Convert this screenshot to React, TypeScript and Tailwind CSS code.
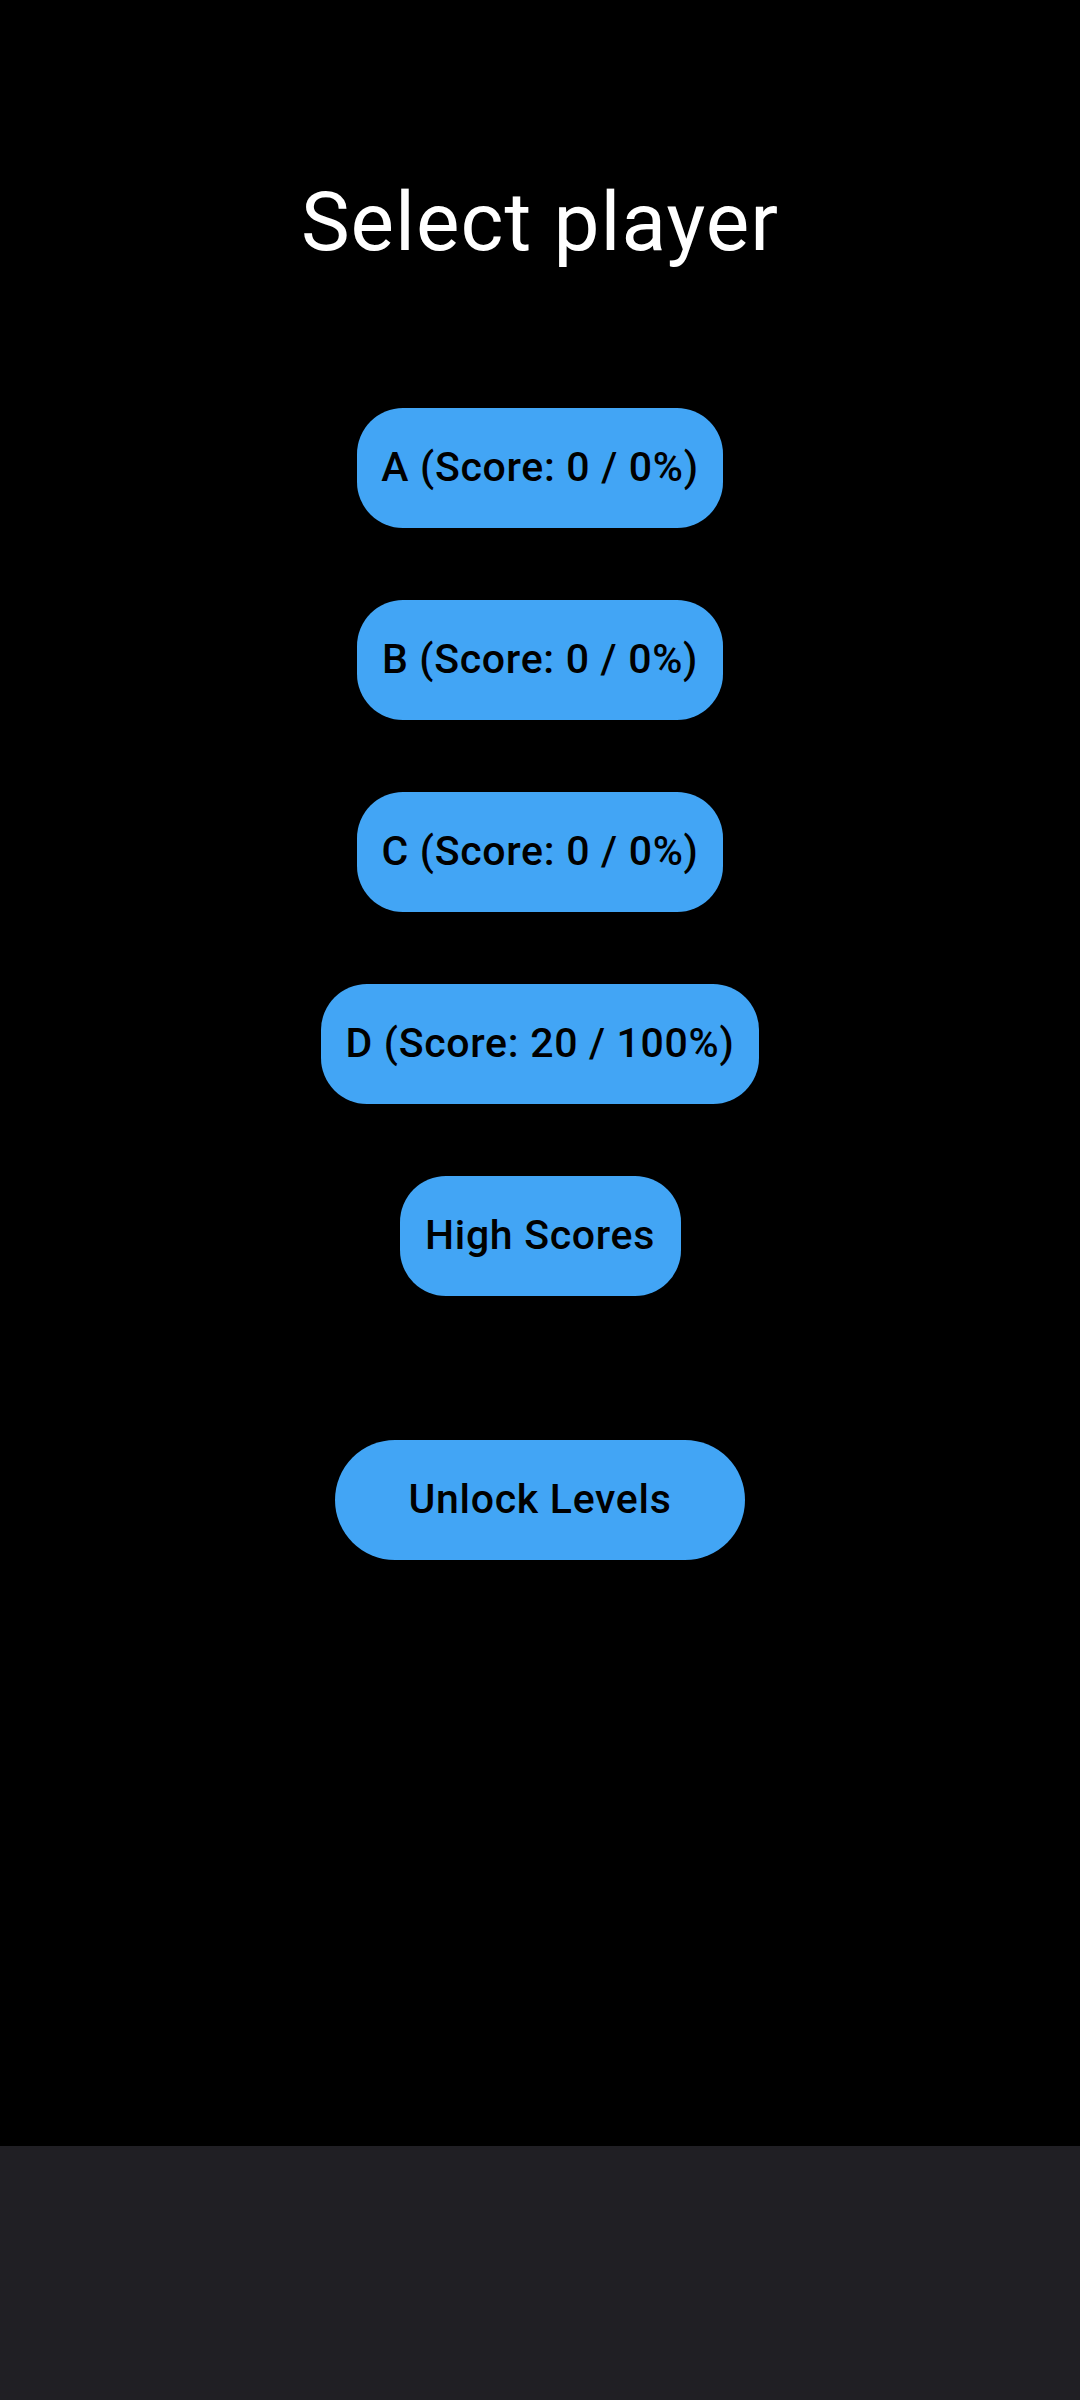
import React from "react";

const players = [
  { label: "A (Score: 0 / 0%)", width: "w-[366px]" },
  { label: "B (Score: 0 / 0%)", width: "w-[366px]" },
  { label: "C (Score: 0 / 0%)", width: "w-[366px]" },
  { label: "D (Score: 20 / 100%)", width: "w-[438px]" },
];

function PillButton({
  label,
  className,
}: {
  label: string;
  className?: string;
}) {
  return (
    <button
      className={`h-[120px] flex items-center justify-center bg-[#42a5f5] text-black text-[41px] font-medium leading-normal tracking-[0.7px] whitespace-nowrap ${className}`}
    >
      {label}
    </button>
  );
}

export default function App() {
  return (
    <div
      className="w-[1080px] h-[2400px] flex flex-col bg-black"
      style={{ fontFamily: "Roboto, 'Noto Sans', sans-serif" }}
    >
      <div className="h-[2146px] flex flex-col items-center">
        {/* Title */}
        <div className="mt-[174px] text-white text-[82px] leading-[96px] font-normal tracking-[1px]">
          Select player
        </div>

        {/* Player list */}
        <div className="mt-[138px] flex flex-col items-center gap-[72px]">
          {players.map((p, index) => (
            <PillButton
              key={index}
              label={p.label}
              className={`${p.width} rounded-[46px]`}
            />
          ))}
          <PillButton label="High Scores" className="w-[281px] rounded-[46px]" />
        </div>

        <PillButton
          label="Unlock Levels"
          className="mt-[144px] w-[410px] rounded-full"
        />
      </div>

      {/* nav bar */}
      <div className="flex-1 bg-[#201f24]" />
    </div>
  );
}
